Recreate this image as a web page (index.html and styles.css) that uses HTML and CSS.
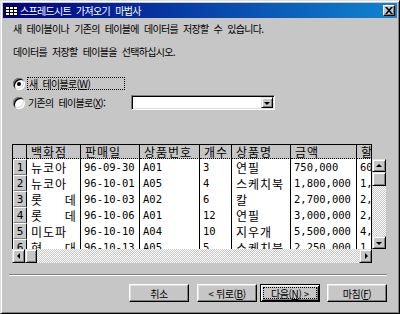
FILE: index.html
```html
<!DOCTYPE html>
<html lang="ko">
<head>
  <meta charset="UTF-8">
  <meta name="viewport" content="width=device-width, initial-scale=1.0">
  <title>스프레드시트 가져오기 마법사</title>
  <link rel="stylesheet" href="styles.css">
</head>
<body>
  <div class="window">
    <div class="titlebar">
      <svg class="app-icon" width="13" height="10" viewBox="0 0 13 10">
        <rect x="0.5" y="0.5" width="12" height="9" fill="#fff" stroke="#000"/>
        <path d="M0 3.5h13M0 6.5h13M4.5 0v10M8.5 0v10" stroke="#000" fill="none"/>
      </svg>
      <span class="title">스프레드시트 가져오기 마법사</span>
      <div class="close">
        <svg width="8" height="7" viewBox="0 0 8 7">
          <path d="M0 0h2l2 2.3L6 0h2L5 3.5 8 7H6L4 4.7 2 7H0l3-3.5z" fill="#000"/>
        </svg>
      </div>
    </div>

    <div class="content">
      <p class="intro">새 테이블이나 기존의 테이블에 데이터를 저장할 수 있습니다.</p>
      <p class="intro second">데이터를 저장할 테이블을 선택하십시오.</p>

      <div class="option">
        <span class="radio checked"></span>
        <span class="focus">새 테이블로(<u>W</u>)</span>
      </div>
      <div class="option existing">
        <span class="radio"></span>
        <span class="label">기존의 테이블로(<u>X</u>):</span>
        <div class="combo">
          <span class="drop"><i class="arrow down"></i></span>
        </div>
      </div>

      <!-- preview of the spreadsheet -->
      <div class="sheet">
        <div class="sheet-view">
          <table class="grid">
            <thead>
              <tr>
                <th class="sel"></th>
                <th class="c1">백화점</th>
                <th class="c2">판매일</th>
                <th class="c3">상품번호</th>
                <th class="c4">개수</th>
                <th class="c5">상품명</th>
                <th class="c6">금액</th>
                <th class="c7">할인액</th>
              </tr>
            </thead>
            <tbody>
              <tr><td class="sel">1</td><td class="k">뉴코아</td><td>96-09-30</td><td>A01</td><td>3</td><td class="k">연필</td><td>750,000</td><td>60,000</td></tr>
              <tr><td class="sel">2</td><td class="k">뉴코아</td><td>96-10-01</td><td>A05</td><td>4</td><td class="k">스케치북</td><td>1,800,000</td><td>1,440,000</td></tr>
              <tr><td class="sel">3</td><td class="k">롯     데</td><td>96-10-03</td><td>A02</td><td>6</td><td class="k">칼</td><td>2,700,000</td><td>2,160,000</td></tr>
              <tr><td class="sel">4</td><td class="k">롯     데</td><td>96-10-06</td><td>A01</td><td>12</td><td class="k">연필</td><td>3,000,000</td><td>2,400,000</td></tr>
              <tr><td class="sel">5</td><td class="k">미도파</td><td>96-10-10</td><td>A04</td><td>10</td><td class="k">지우개</td><td>5,500,000</td><td>4,400,000</td></tr>
              <tr><td class="sel">6</td><td class="k">현     대</td><td>96-10-13</td><td>A05</td><td>5</td><td class="k">스케치북</td><td>2,250,000</td><td>1,800,000</td></tr>
            </tbody>
          </table>
        </div>

        <div class="vscroll">
          <span class="sbtn"><i class="arrow up"></i></span>
          <span class="thumb"></span>
          <span class="track"></span>
          <span class="sbtn"><i class="arrow down"></i></span>
        </div>

        <div class="hscroll">
          <span class="sbtn"><i class="arrow left"></i></span>
          <span class="thumb"></span>
          <span class="track"></span>
          <span class="sbtn"><i class="arrow right"></i></span>
        </div>

        <div class="corner"></div>
      </div>

      <div class="separator"></div>

      <div class="buttons">
        <div class="btn cancel"><span class="label">취소</span></div>
        <div class="btn back"><span class="label">&lt; 뒤로(<u>B</u>)</span></div>
        <div class="btn next default"><span class="label">다음(<u>N</u>) &gt;</span></div>
        <div class="btn"><span class="label">마침(<u>F</u>)</span></div>
      </div>
    </div>
  </div>
</body>
</html>
```

FILE: styles.css
```css
* {
  box-sizing: border-box;
}

body {
  margin: 0;
  font-family: "Noto Sans CJK KR", sans-serif;
  font-size: 10px;
  color: #000;
  background-color: #c6c6c6;
}

p {
  margin: 0;
}

u {
  text-decoration: underline;
  text-underline-offset: 1px;
}

/* Window frame */
.window {
  width: 400px;
  height: 314px;
  padding: 2px;
  background-color: #c6c6c6;
  border: 1px solid;
  border-color: #dfdfdf #000 #000 #dfdfdf;
  box-shadow: inset 1px 1px #fff, inset -1px -1px #808080;
}

.titlebar {
  display: flex;
  align-items: center;
  height: 15px;
  padding: 0 2px;
  background: linear-gradient(to right, #000080, #1084d0);
}

.app-icon {
  display: block;
  margin-right: 2px;
}

.title {
  color: #fff;
  letter-spacing: -0.7px;
  word-spacing: 3px;
  line-height: 15px;
}

.close {
  display: flex;
  align-items: center;
  justify-content: center;
  width: 12px;
  height: 11px;
  margin-left: auto;
  background-color: #c6c6c6;
  border: 1px solid;
  border-color: #fff #000 #000 #fff;
  box-shadow: inset -1px -1px #808080;
}

.close svg {
  display: block;
}

/* Page content */
.content {
  padding: 0 10px 0 9px;
}

.intro {
  margin: 5px 0 0 1px;
  line-height: 12px;
  letter-spacing: -0.7px;
  word-spacing: 3px;
}

.intro.second {
  margin-top: 11px;
}

.option {
  display: flex;
  align-items: center;
  height: 13px;
  margin-top: 19px;
  padding-left: 1px;
  letter-spacing: -0.7px;
  word-spacing: 3px;
}

.option.existing {
  height: 15px;
  margin-top: 5px;
}

.radio {
  position: relative;
  width: 12px;
  height: 12px;
  margin-right: 2px;
  border-radius: 50%;
  background-color: #fff;
  box-shadow: inset 1px 1px #808080, inset -1px -1px #fff, inset 2px 2px #000, inset -2px -2px #dfdfdf;
}

.radio.checked::after {
  content: "";
  position: absolute;
  left: 4px;
  top: 4px;
  width: 4px;
  height: 4px;
  border-radius: 50%;
  background-color: #000;
}

.focus {
  width: 98px;
  height: 13px;
  padding: 0 2px 0 1px;
  line-height: 11px;
  border: 1px dotted #000;
}

.option .label {
  width: 104px;
  padding-left: 1px;
}

.combo {
  display: flex;
  justify-content: flex-end;
  width: 144px;
  height: 15px;
  background-color: #fff;
  border: 1px solid;
  border-color: #808080 #fff #fff #808080;
  box-shadow: inset 1px 1px #000, inset -1px -1px #dfdfdf;
  padding: 1px;
}

.drop,
.sbtn {
  display: flex;
  align-items: center;
  justify-content: center;
  background-color: #c6c6c6;
  border: 1px solid;
  border-color: #dfdfdf #000 #000 #dfdfdf;
  box-shadow: inset 1px 1px #fff, inset -1px -1px #808080;
}

.drop {
  width: 12px;
  height: 11px;
}

.arrow {
  display: block;
  width: 0;
  height: 0;
  border: 3px solid transparent;
}

.arrow.down {
  border-top: 3px solid #000;
  border-bottom-width: 0;
  margin-top: 1px;
}

.arrow.up {
  border-bottom: 3px solid #000;
  border-top-width: 0;
}

.arrow.left {
  border-right: 3px solid #000;
  border-left-width: 0;
}

.arrow.right {
  border-left: 3px solid #000;
  border-right-width: 0;
  margin-left: 1px;
}

/* Spreadsheet preview */
.sheet {
  display: grid;
  grid-template-columns: 360px 14px;
  grid-template-rows: 105px 14px;
  margin: 34px 0 0 0;
}

.sheet-view {
  overflow: hidden;
  border: 1px solid #000;
  border-bottom: none;
}

.grid {
  table-layout: fixed;
  width: 385px;
  border-collapse: separate;
  border-spacing: 0;
  font-family: "DejaVu Sans Mono", "Noto Sans CJK KR", monospace;
  font-size: 10.5px;
}

.grid thead tr {
  height: 14px;
}

.grid tbody tr {
  height: 16px;
}

.grid th,
.grid td {
  padding: 0 0 0 3px;
  line-height: 13px;
  text-align: left;
  white-space: pre;
  border-right: 1px solid #000;
}

.grid th {
  font-family: "Noto Sans CJK KR", sans-serif;
  font-size: 12px;
  font-weight: normal;
  letter-spacing: 1px;
  padding-left: 4px;
  background-color: #c6c6c6;
  border-bottom: 1px dotted #000;
}

.grid td {
  background-color: #fff;
}

.grid td.k {
  font-family: "Noto Sans CJK KR", sans-serif;
  font-size: 12px;
  letter-spacing: 1px;
  padding-left: 4px;
}

.grid .sel {
  width: 14px;
  padding: 0;
  text-align: center;
  background-color: #c6c6c6;
}

.grid td.sel {
  font-size: 11px;
  border-top: 1px solid #fff;
  border-left: 1px solid #fff;
  border-bottom: 1px solid #808080;
}

.grid .c1 { width: 54px; }
.grid .c2 { width: 59px; }
.grid .c3 { width: 60px; }
.grid .c4 { width: 32px; }
.grid .c5 { width: 59px; }
.grid .c6 { width: 66px; }
.grid .c7 { width: 41px; }

.vscroll {
  display: flex;
  flex-direction: column;
  margin-top: 15px;
}

.vscroll .sbtn {
  width: 14px;
  height: 13px;
}

.vscroll .thumb {
  height: 14px;
}

.hscroll {
  display: flex;
}

.hscroll .sbtn {
  width: 13px;
  height: 14px;
}

.hscroll .thumb {
  width: 12px;
}

.thumb {
  background-color: #c6c6c6;
  border: 1px solid;
  border-color: #dfdfdf #000 #000 #dfdfdf;
  box-shadow: inset 1px 1px #fff, inset -1px -1px #808080;
}

.track {
  flex: 1;
  background: repeating-conic-gradient(#c6c6c6 0% 25%, #fff 0% 50%) 0 0 / 2px 2px;
}

/* Footer */
.separator {
  height: 2px;
  margin: 11px 0 0 -3px;
  border-top: 1px solid #808080;
  border-bottom: 1px solid #fff;
}

.buttons {
  display: flex;
  justify-content: flex-end;
  margin-top: 8px;
}

.btn {
  display: flex;
  width: 60px;
  height: 18px;
  background-color: #c6c6c6;
  border: 1px solid;
  border-color: #fff #000 #000 #fff;
  box-shadow: inset -1px -1px #808080, inset 1px 1px #dfdfdf;
  letter-spacing: -0.4px;
}

.btn .label {
  flex: 1;
  display: flex;
  align-items: center;
  justify-content: center;
  margin: 2px;
  border: 1px solid transparent;
}

.btn.cancel {
  margin-right: 8px;
}

.btn.back {
  margin-right: 3px;
}

.btn.next {
  margin-right: 7px;
}

.btn.default {
  border-color: #000;
  box-shadow: inset 1px 1px #fff, inset -1px -1px #000, inset 2px 2px #dfdfdf, inset -2px -2px #808080;
}

.btn.default .label {
  border: 1px dotted #000;
}
```
